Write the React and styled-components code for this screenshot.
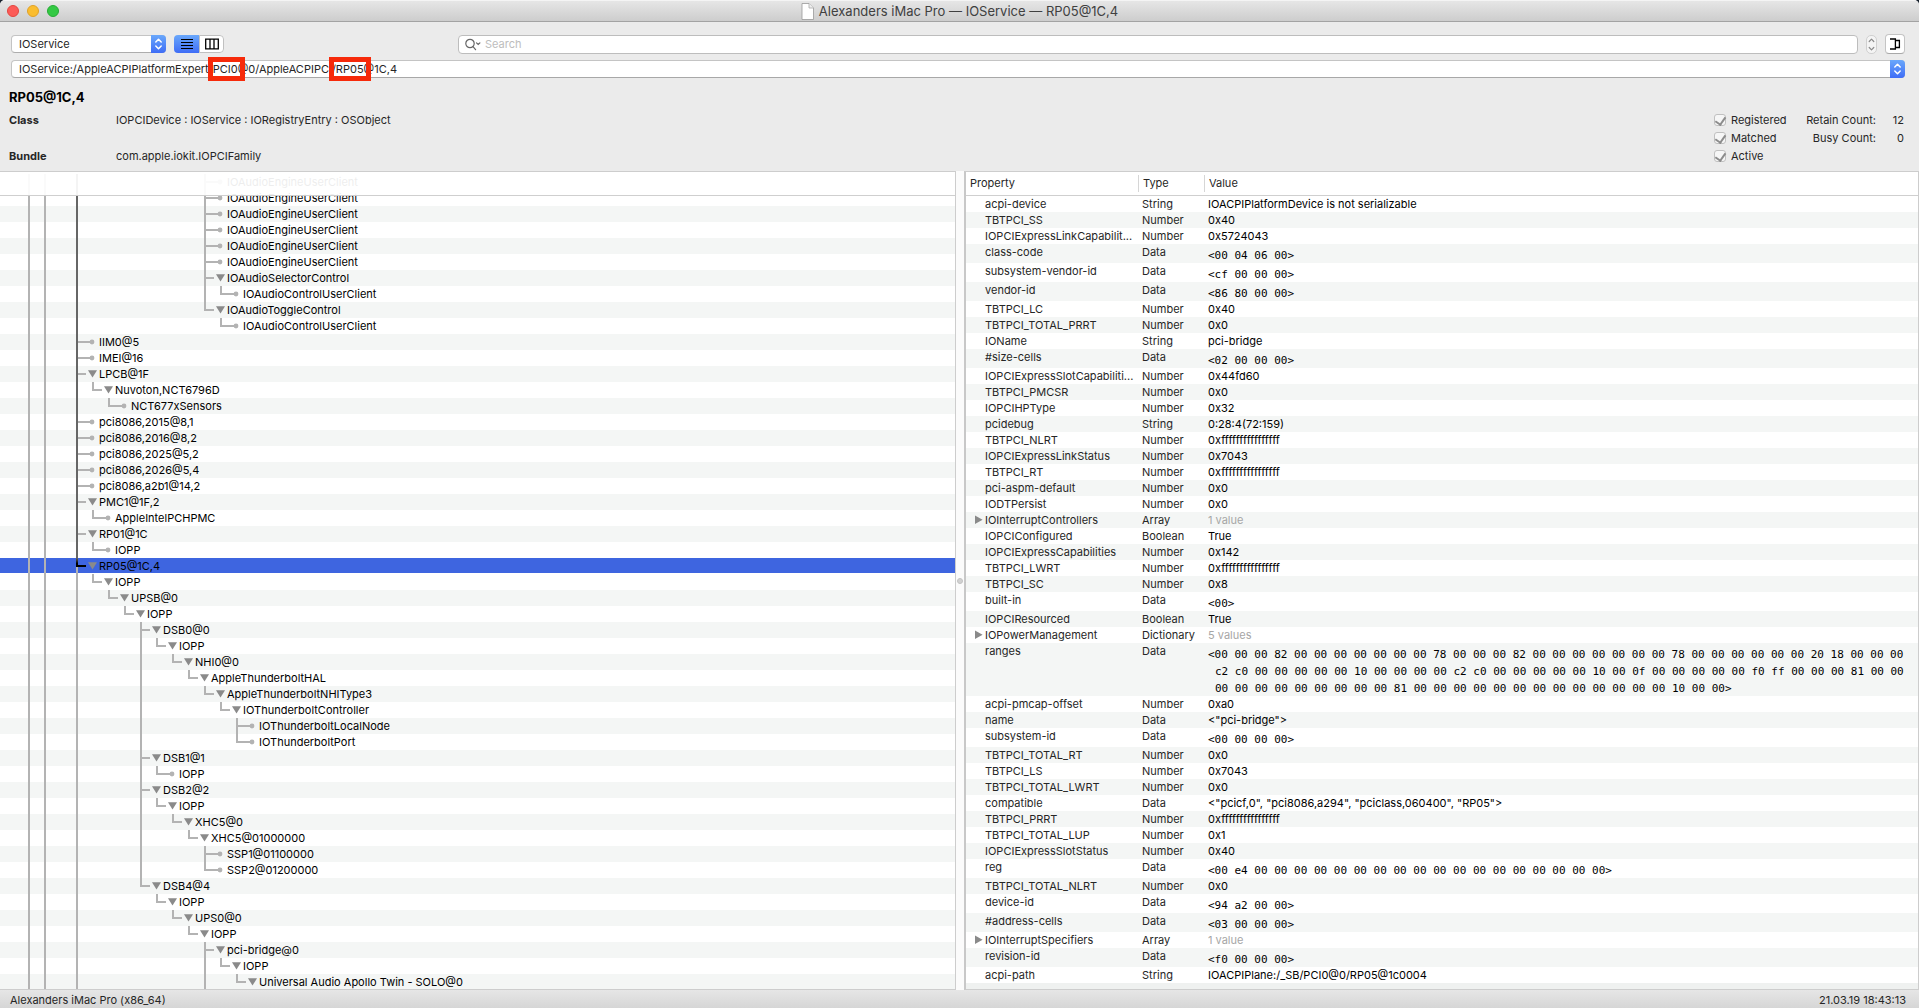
import { useState } from "react";
import styled, { createGlobalStyle } from "styled-components";

const GlobalStyle = createGlobalStyle`
  * {
    box-sizing: border-box;
  }
  body {
    margin: 0;
    background: #16202c;
    font-family: Inter, "Liberation Sans", sans-serif;
    font-size: 11px;
    line-height: 16px;
    color: #262626;
  }
  button,
  input,
  select {
    font: inherit;
    color: inherit;
    margin: 0;
  }
`;

const START = 28;
const STEP = 16;

// level, name, kind ("leaf" or "open"), last child of its parent
const nodes = [
  [11, "IOAudioEngineUserClient", "leaf"],
  [11, "IOAudioEngineUserClient", "leaf"],
  [11, "IOAudioEngineUserClient", "leaf"],
  [11, "IOAudioEngineUserClient", "leaf"],
  [11, "IOAudioEngineUserClient", "leaf"],
  [11, "IOAudioEngineUserClient", "leaf"],
  [11, "IOAudioSelectorControl", "open"],
  [12, "IOAudioControlUserClient", "leaf", true],
  [11, "IOAudioToggleControl", "open", true],
  [12, "IOAudioControlUserClient", "leaf", true],
  [3, "IIM0@5", "leaf"],
  [3, "IMEI@16", "leaf"],
  [3, "LPCB@1F", "open"],
  [4, "Nuvoton,NCT6796D", "open", true],
  [5, "NCT677xSensors", "leaf", true],
  [3, "pci8086,2015@8,1", "leaf"],
  [3, "pci8086,2016@8,2", "leaf"],
  [3, "pci8086,2025@5,2", "leaf"],
  [3, "pci8086,2026@5,4", "leaf"],
  [3, "pci8086,a2b1@14,2", "leaf"],
  [3, "PMC1@1F,2", "open"],
  [4, "AppleIntelPCHPMC", "leaf", true],
  [3, "RP01@1C", "open"],
  [4, "IOPP", "leaf", true],
  [3, "RP05@1C,4", "open"],
  [4, "IOPP", "open", true],
  [5, "UPSB@0", "open", true],
  [6, "IOPP", "open", true],
  [7, "DSB0@0", "open"],
  [8, "IOPP", "open", true],
  [9, "NHI0@0", "open", true],
  [10, "AppleThunderboltHAL", "open", true],
  [11, "AppleThunderboltNHIType3", "open", true],
  [12, "IOThunderboltController", "open", true],
  [13, "IOThunderboltLocalNode", "leaf"],
  [13, "IOThunderboltPort", "leaf", true],
  [7, "DSB1@1", "open"],
  [8, "IOPP", "leaf", true],
  [7, "DSB2@2", "open"],
  [8, "IOPP", "open", true],
  [9, "XHC5@0", "open", true],
  [10, "XHC5@01000000", "open", true],
  [11, "SSP1@01100000", "leaf"],
  [11, "SSP2@01200000", "leaf", true],
  [7, "DSB4@4", "open", true],
  [8, "IOPP", "open", true],
  [9, "UPS0@0", "open", true],
  [10, "IOPP", "open", true],
  [11, "pci-bridge@0", "open"],
  [12, "IOPP", "open", true],
  [13, "Universal Audio Apollo Twin - SOLO@0", "open", true],
];

const selectedIndex = nodes.findIndex((n) => n[1] === "RP05@1C,4");

// works out which vertical lines run through each row
const buildRows = () => {
  let running = [0, 1, 3];
  return nodes.map(([level, name, kind, last], index) => {
    running = running.filter((l) => l !== level);
    const through = running;
    if (!last) running = [...running, level];
    return {
      level,
      name,
      leaf: kind === "leaf",
      last: !!last,
      through,
      index,
      selected: index === selectedIndex,
    };
  });
};

const zeros = (n) => Array(n).fill("00").join(" ");

const ranges = [
  `<${zeros(3)} 82 ${zeros(7)} 78 ${zeros(3)} 82 ${zeros(7)} 78 ${zeros(6)} 20 18 ${zeros(3)}`,
  `c2 c0 ${zeros(5)} 10 ${zeros(4)} c2 c0 ${zeros(5)} 10 00 0f ${zeros(5)} f0 ff ${zeros(3)} 81 00 00`,
  `${zeros(9)} 81 ${zeros(13)} 10 00 00>`,
].join(" ");

const properties = [
  ["acpi-device", "String", "IOACPIPlatformDevice is not serializable"],
  ["TBTPCI_SS", "Number", "0x40"],
  ["IOPCIExpressLinkCapabilit...", "Number", "0x5724043"],
  ["class-code", "Data", "<00 04 06 00>"],
  ["subsystem-vendor-id", "Data", "<cf 00 00 00>"],
  ["vendor-id", "Data", "<86 80 00 00>"],
  ["TBTPCI_LC", "Number", "0x40"],
  ["TBTPCI_TOTAL_PRRT", "Number", "0x0"],
  ["IOName", "String", "pci-bridge"],
  ["#size-cells", "Data", "<02 00 00 00>"],
  ["IOPCIExpressSlotCapabiliti...", "Number", "0x44fd60"],
  ["TBTPCI_PMCSR", "Number", "0x0"],
  ["IOPCIHPType", "Number", "0x32"],
  ["pcidebug", "String", "0:28:4(72:159)"],
  ["TBTPCI_NLRT", "Number", "0xffffffffffffffff"],
  ["IOPCIExpressLinkStatus", "Number", "0x7043"],
  ["TBTPCI_RT", "Number", "0xffffffffffffffff"],
  ["pci-aspm-default", "Number", "0x0"],
  ["IODTPersist", "Number", "0x0"],
  ["IOInterruptControllers", "Array", "1 value"],
  ["IOPCIConfigured", "Boolean", "True"],
  ["IOPCIExpressCapabilities", "Number", "0x142"],
  ["TBTPCI_LWRT", "Number", "0xffffffffffffffff"],
  ["TBTPCI_SC", "Number", "0x8"],
  ["built-in", "Data", "<00>"],
  ["IOPCIResourced", "Boolean", "True"],
  ["IOPowerManagement", "Dictionary", "5 values"],
  ["ranges", "Data", ranges],
  ["acpi-pmcap-offset", "Number", "0xa0"],
  ["name", "Data", '<"pci-bridge">'],
  ["subsystem-id", "Data", "<00 00 00 00>"],
  ["TBTPCI_TOTAL_RT", "Number", "0x0"],
  ["TBTPCI_LS", "Number", "0x7043"],
  ["TBTPCI_TOTAL_LWRT", "Number", "0x0"],
  ["compatible", "Data", '<"pcicf,0", "pci8086,a294", "pciclass,060400", "RP05">'],
  ["TBTPCI_PRRT", "Number", "0xffffffffffffffff"],
  ["TBTPCI_TOTAL_LUP", "Number", "0x1"],
  ["IOPCIExpressSlotStatus", "Number", "0x40"],
  ["reg", "Data", `<00 e4 ${zeros(18)}>`],
  ["TBTPCI_TOTAL_NLRT", "Number", "0x0"],
  ["device-id", "Data", "<94 a2 00 00>"],
  ["#address-cells", "Data", "<03 00 00 00>"],
  ["IOInterruptSpecifiers", "Array", "1 value"],
  ["revision-id", "Data", "<f0 00 00 00>"],
  ["acpi-path", "String", "IOACPIPlane:/_SB/PCI0@0/RP05@1c0004"],
];

const Chevrons = ({ color = "#fff" }) => (
  <svg width="9" height="14" viewBox="0 0 9 14" fill="none" stroke={color} strokeWidth="1.5" strokeLinecap="round" strokeLinejoin="round">
    <path d="M1.8 5 4.5 2.3 7.2 5M1.8 9l2.7 2.7L7.2 9" />
  </svg>
);

const Guides = ({ row }) => {
  const { level, leaf, last, through, selected, index } = row;
  const x = START + level * STEP;
  const line = "#b3b3b3";
  const colorOf = (l) => (l === 3 && index < selectedIndex ? "#666" : line);
  const width = leaf ? x + 23 : x + 10;
  return (
    <GuideSvg width={width} height="16" aria-hidden="true">
      {through.map((l) => (
        <rect key={l} x={START + l * STEP} y="0" width="2" height="16" fill={colorOf(l)} />
      ))}
      <rect x={x} y="0" width="2" height={last ? 9 : 16} fill={colorOf(level)} />
      <rect x={x + 2} y="7" width={leaf ? 13 : 8} height="2" fill={line} />
      {leaf && <circle cx={x + 16} cy="8" r="2.4" fill={line} />}
      {selected && (
        <>
          <defs>
            <linearGradient id="pathEnd" x1="0" x2="0" y1="0" y2="1">
              <stop offset="0" stopColor="#666" />
              <stop offset="0.6" stopColor="#000" />
            </linearGradient>
          </defs>
          <rect x={x} y="0" width="2" height="9" fill="url(#pathEnd)" />
          <rect x={x} y="7" width="10" height="2" fill="#000" />
        </>
      )}
    </GuideSvg>
  );
};

const TreeNode = ({ row }) => (
  <TreeRow role="treeitem" aria-level={row.level + 1} aria-selected={row.selected} $selected={row.selected}>
    <Guides row={row} />
    {!row.leaf && (
      <Disclosure aria-label={"Collapse " + row.name}>
        <svg width="9" height="16">
          <path d="M0 4.3h9L4.5 11.6z" fill="#8a8a8a" />
        </svg>
      </Disclosure>
    )}
    <span>{row.name}</span>
  </TreeRow>
);

const Property = ({ name, type, value }) => {
  const group = type === "Array" || type === "Dictionary";
  const hex = type === "Data" && !value.includes('"');
  return (
    <tr>
      <NameCell>
        <NameLine>
          {group && (
            <Expand aria-label={"Expand " + name}>
              <svg width="8" height="16">
                <path d="M0 3.6v8.4l7.6-4.2z" fill="#8a8a8a" />
              </svg>
            </Expand>
          )}
          <Name $group={group}>{name}</Name>
        </NameLine>
      </NameCell>
      <Cell>{type}</Cell>
      {hex ? (
        <HexCell>
          <div>{value}</div>
        </HexCell>
      ) : (
        <ValueCell $muted={group}>{value}</ValueCell>
      )}
    </tr>
  );
};

const App = () => {
  const [view, setView] = useState("list");
  const [query, setQuery] = useState("");
  const rows = buildRows();

  return (
    <Window>
      <GlobalStyle />
      <TitleBar>
        <Lights>
          <Light aria-label="Close" $color="#fc5b57" $edge="#e2463f" />
          <Light aria-label="Minimize" $color="#fabd2f" $edge="#e0a128" />
          <Light aria-label="Zoom" $color="#34c944" $edge="#27ab35" />
        </Lights>
        <Title>
          <svg width="13" height="17" viewBox="0 0 13 17">
            <path d="M1 .5h7l4.5 4.5v11.5H1z" fill="#fff" stroke="#999" strokeWidth=".8" />
            <path d="M8 .5V5h4.5" fill="#eee" stroke="#aaa" strokeWidth=".8" />
          </svg>
          Alexanders iMac Pro — IOService — RP05@1C,4
        </Title>
      </TitleBar>

      <Toolbar>
        <Popup>
          <select aria-label="Plane" defaultValue="IOService">
            <option>IOService</option>
          </select>
          <BlueEnd>
            <Chevrons />
          </BlueEnd>
        </Popup>
        <Segments>
          <Segment aria-label="Outline view" $active={view === "list"} onClick={() => setView("list")}>
            <svg width="12" height="12" stroke="#000" strokeWidth="1">
              <path d="M0 1.5h12M0 4.5h12M0 7.5h12M0 10.5h12" />
            </svg>
          </Segment>
          <Segment aria-label="Column view" $active={view === "columns"} onClick={() => setView("columns")}>
            <svg width="14" height="12" stroke="#000" fill="none" strokeWidth="1.3">
              <path d="M.7 1.2h12.6v9.6H.7zM5 1v10M9 1v10" />
            </svg>
          </Segment>
        </Segments>
        <Search>
          <svg width="18" height="13" fill="none" stroke="#666" strokeWidth="1.2" strokeLinecap="round">
            <circle cx="5" cy="5.5" r="4.2" />
            <path d="m8 8.7 2.6 3M11.5 4.8l1.7 1.7 1.7-1.7" />
          </svg>
          <input aria-label="Search" placeholder="Search" value={query} onChange={(e) => setQuery(e.target.value)} />
        </Search>
        <Stepper aria-label="Previous or next match">
          <svg width="7" height="15" fill="none" stroke="#8a8a8a" strokeWidth="1.2" strokeLinecap="round" strokeLinejoin="round">
            <path d="m1.2 4.5 2.3-2.3 2.3 2.3M1.2 10.5l2.3 2.3 2.3-2.3" />
          </svg>
        </Stepper>
        <DrawerButton aria-label="Toggle drawer">
          <svg width="12" height="12" fill="none" stroke="#000" strokeWidth="1.3">
            <path d="M1 1h5.4v10H1M6.4 2.5h4v7h-4" />
          </svg>
        </DrawerButton>
      </Toolbar>

      <PathRow>
        <PathBox>
          <input aria-label="Path" defaultValue="IOService:/AppleACPIPlatformExpert/PCI0@0/AppleACPIPCI/RP05@1C,4" />
          <BlueEnd>
            <Chevrons />
          </BlueEnd>
          <Marker $left={197} $width={37} />
          <Marker $left={318} $width={42} />
        </PathBox>
      </PathRow>

      <Summary>
        <h1>RP05@1C,4</h1>
        <SummaryBody>
          <Facts>
            <dt>Class</dt>
            <dd>IOPCIDevice : IOService : IORegistryEntry : OSObject</dd>
            <dt>Bundle</dt>
            <dd>com.apple.iokit.IOPCIFamily</dd>
          </Facts>
          <Checks>
            {["Registered", "Matched", "Active"].map((label) => (
              <label key={label}>
                <input type="checkbox" defaultChecked disabled />
                {label}
              </label>
            ))}
          </Checks>
          <Counts>
            <dt>Retain Count:</dt>
            <dd>12</dd>
            <dt>Busy Count:</dt>
            <dd>0</dd>
          </Counts>
        </SummaryBody>
      </Summary>

      <Panes>
        <TreePane>
          <TreeHeader />
          <Tree role="tree" aria-label="Registry">
            {rows.map((row) => (
              <TreeNode key={row.index} row={row} />
            ))}
          </Tree>
        </TreePane>
        <Splitter>
          <span />
        </Splitter>
        <PropertyPane>
          <PropertyTable>
            <colgroup>
              <col className="name" />
              <col className="type" />
              <col />
            </colgroup>
            <thead>
              <tr>
                <th>
                  <div>Property</div>
                </th>
                <th>
                  <div>Type</div>
                </th>
                <th>
                  <div>Value</div>
                </th>
              </tr>
            </thead>
            <tbody>
              {properties.map(([name, type, value]) => (
                <Property key={name} name={name} type={type} value={value} />
              ))}
            </tbody>
          </PropertyTable>
          <Filler />
        </PropertyPane>
      </Panes>

      <StatusBar>
        <span>Alexanders iMac Pro (x86_64)</span>
        <Clock>21.03.19 18:43:13</Clock>
      </StatusBar>
    </Window>
  );
};

const Window = styled.div`
  display: flex;
  flex-direction: column;
  height: 100vh;
  background: #ebebeb;
  border-radius: 5px 5px 0 0;
  overflow: hidden;
`;

const TitleBar = styled.header`
  display: grid;
  grid-template-columns: 1fr auto 1fr;
  align-items: center;
  flex: none;
  height: 22px;
  background: linear-gradient(#e6e6e6, #cdcdcd);
  border-top: 1px solid #f4f4f4;
  border-bottom: 1px solid #a3a3a3;
`;

const Lights = styled.div`
  display: flex;
  gap: 8px;
  padding-left: 7px;
`;

const Light = styled.button`
  width: 12px;
  height: 12px;
  padding: 0;
  border: 1px solid ${(p) => p.$edge};
  border-radius: 50%;
  background: ${(p) => p.$color};
`;

const Title = styled.div`
  display: flex;
  align-items: center;
  gap: 5px;
  font-size: 13px;
  color: #404040;
`;

const Toolbar = styled.div`
  display: flex;
  align-items: center;
  flex: none;
  height: 20px;
  margin: 12px 14px 0 11px;
`;

const BlueEnd = styled.span`
  position: absolute;
  top: 0;
  right: 0;
  bottom: 0;
  width: 15px;
  display: flex;
  align-items: center;
  justify-content: center;
  border-radius: 0 4px 4px 0;
  background: linear-gradient(#6aa8fb, #3f6df6);
  pointer-events: none;
`;

const Popup = styled.div`
  position: relative;
  width: 155px;
  height: 18px;
  select {
    appearance: none;
    display: block;
    width: 100%;
    height: 18px;
    padding: 0 20px 0 7px;
    border: 1px solid #c4c4c4;
    border-bottom-color: #adadad;
    border-radius: 4px;
    background: #fff;
    line-height: 16px;
  }
`;

const Segments = styled.div`
  display: flex;
  height: 18px;
  margin-left: 8px;
  border-radius: 4px;
  overflow: hidden;
`;

const Segment = styled.button`
  display: flex;
  align-items: center;
  justify-content: center;
  width: 25px;
  padding: 0;
  border: ${(p) => (p.$active ? "none" : "1px solid #c0c0c0")};
  border-radius: ${(p) => (p.$active ? "0" : "0 4px 4px 0")};
  background: ${(p) => (p.$active ? "linear-gradient(#6aa8fb, #3f6df6)" : "#fff")};
`;

const Search = styled.div`
  display: flex;
  align-items: center;
  flex: 1;
  height: 19px;
  margin-left: 234px;
  padding-left: 6px;
  border: 1px solid #bdbdbd;
  border-radius: 4px;
  background: #fff;
  input {
    flex: 1;
    height: 16px;
    padding: 0 2px;
    border: none;
    outline: none;
    background: none;
  }
  input::placeholder {
    color: #bdbdbd;
    opacity: 1;
  }
`;

const Stepper = styled.button`
  display: flex;
  align-items: center;
  justify-content: center;
  width: 11px;
  height: 19px;
  margin-left: 8px;
  padding: 0;
  border: 1px solid #d0d0d0;
  border-radius: 5px;
  background: #f4f4f4;
`;

const DrawerButton = styled.button`
  display: flex;
  align-items: center;
  justify-content: center;
  width: 20px;
  height: 20px;
  margin-left: 8px;
  padding: 0;
  border: 1px solid #c4c4c4;
  border-bottom-color: #a8a8a8;
  border-radius: 4px;
  background: #fff;
`;

const PathRow = styled.div`
  flex: none;
  padding: 6px 14px 0 11px;
`;

const PathBox = styled.div`
  position: relative;
  height: 18px;
  input {
    display: block;
    width: 100%;
    height: 18px;
    padding: 0 20px 0 7px;
    border: 1px solid #c4c4c4;
    border-bottom-color: #a8a8a8;
    border-radius: 4px;
    background: #fff;
  }
`;

const Marker = styled.span`
  position: absolute;
  top: -3px;
  left: ${(p) => p.$left}px;
  width: ${(p) => p.$width}px;
  height: 24px;
  border: 5px solid #f62a0a;
  pointer-events: none;
`;

const Summary = styled.section`
  flex: none;
  padding: 10px 15px 6px 9px;
  h1 {
    margin: 0 0 5px;
    font-size: 13px;
    line-height: 18px;
    font-weight: 700;
    color: #000;
  }
`;

const SummaryBody = styled.div`
  display: flex;
  line-height: 18px;
`;

const Facts = styled.dl`
  display: grid;
  grid-template-columns: 107px auto;
  grid-template-rows: 36px 18px;
  flex: 1;
  align-content: start;
  justify-content: start;
  margin: 0;
  dt {
    font-weight: 700;
  }
  dd {
    margin: 0;
  }
`;

const Checks = styled.div`
  display: flex;
  flex-direction: column;
  width: 92px;
  label {
    display: flex;
    align-items: center;
    gap: 5px;
    height: 18px;
  }
  input {
    appearance: none;
    display: flex;
    justify-content: center;
    width: 12px;
    height: 12px;
    border: 1px solid #c0c0c0;
    border-radius: 3px;
    background: #f6f6f6;
  }
  input:checked::after {
    content: "";
    width: 5px;
    height: 8px;
    border: solid #8c8c8c;
    border-width: 0 2px 2px 0;
    transform: rotate(35deg);
  }
`;

const Counts = styled.dl`
  display: grid;
  grid-template-columns: 70px 28px;
  grid-auto-rows: 18px;
  margin: 0;
  text-align: right;
  dd {
    margin: 0;
  }
`;

const Panes = styled.main`
  display: flex;
  flex: 1;
  min-height: 0;
`;

const TreePane = styled.section`
  position: relative;
  flex: 0 1 956px;
  border: 1px solid #cdcdcd;
  border-left: none;
  background: #fff;
  overflow: hidden;
`;

const TreeHeader = styled.div`
  position: absolute;
  top: 0;
  left: 0;
  right: 0;
  height: 24px;
  border-bottom: 1px solid #cfcfcf;
  background: rgba(255, 255, 255, 0.93);
`;

const Tree = styled.div`
  padding-top: 2px;
  color: #000;
`;

const TreeRow = styled.div`
  display: flex;
  height: 16px;
  white-space: nowrap;
  background: ${(p) => (p.$selected ? "linear-gradient(#3e65e0 15px, #fff 15px)" : "#fff")};
  &:nth-child(odd) {
    background: ${(p) => (p.$selected ? "linear-gradient(#3e65e0 15px, #fff 15px)" : "#f4f6f5")};
  }
`;

const GuideSvg = styled.svg`
  flex: none;
`;

const Disclosure = styled.button`
  display: flex;
  flex: none;
  width: 13px;
  height: 16px;
  padding: 0 2px;
  border: none;
  background: none;
`;

const Splitter = styled.div`
  display: flex;
  align-items: center;
  justify-content: center;
  flex: 0 0 8px;
  background: #fbfbfb;
  span {
    width: 6px;
    height: 6px;
    border: 1px solid #c2c2c2;
    border-radius: 50%;
    background: #d2d2d2;
  }
`;

const PropertyPane = styled.section`
  display: flex;
  flex-direction: column;
  flex: 1;
  min-width: 0;
  border: 1px solid #cdcdcd;
  border-left: 2px solid #c8c8c8;
  background: #fff;
  overflow: hidden;
`;

const PropertyTable = styled.table`
  width: 100%;
  table-layout: fixed;
  border-collapse: separate;
  border-spacing: 0;
  .name {
    width: 173px;
  }
  .type {
    width: 66px;
  }
  th {
    height: 24px;
    padding: 0;
    border-bottom: 1px solid #cfcfcf;
    font-weight: 400;
    text-align: left;
  }
  th div {
    height: 17px;
    padding-left: 4px;
    border-right: 1px solid #d6d6d6;
  }
  th:last-child div {
    border-right: none;
  }
  tbody tr:nth-child(even) {
    background: #f4f6f5;
  }
`;

const Cell = styled.td`
  padding: 0 3px;
  vertical-align: top;
  white-space: nowrap;
`;

const NameCell = styled(Cell)`
  padding: 0 3px 0 9px;
`;

const NameLine = styled.div`
  display: flex;
  height: 16px;
`;

const Name = styled.span`
  padding-left: ${(p) => (p.$group ? 0 : 10)}px;
`;

const Expand = styled.button`
  display: flex;
  flex: none;
  width: 10px;
  height: 16px;
  padding: 0;
  border: none;
  background: none;
`;

const ValueCell = styled(Cell)`
  color: ${(p) => (p.$muted ? "#a6a6a6" : "#000")};
`;

const HexCell = styled(Cell)`
  padding: 3px 0 0 10px;
  font-family: "DejaVu Sans Mono", monospace;
  line-height: 17px;
  text-indent: -7px;
  white-space: normal;
  color: #000;
  div {
    margin-bottom: -1px;
  }
`;

const Filler = styled.div`
  flex: 1;
  background: #eff1f0;
`;

const StatusBar = styled.footer`
  display: flex;
  justify-content: space-between;
  flex: none;
  height: 18px;
  padding: 2px 13px 0 10px;
  background: linear-gradient(#e6e6e6, #d6d6d6);
`;

const Clock = styled.time`
  white-space: nowrap;
`;

export default App;
